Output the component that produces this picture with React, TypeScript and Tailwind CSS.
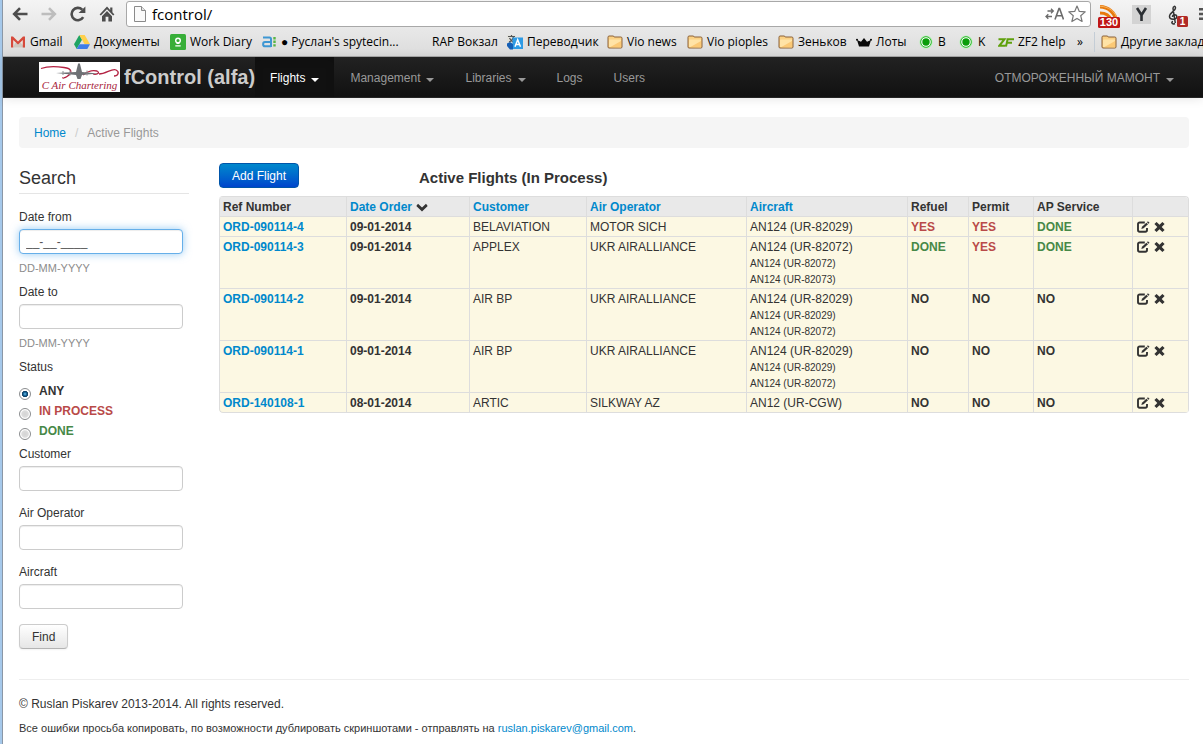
import { useState } from "react";
import type { ReactNode } from "react";

type State = "YES" | "NO" | "DONE";

interface Flight {
  ref: string;
  date: string;
  customer: string;
  operator: string;
  aircraft: string;
  legs: string[];
  refuel: State;
  permit: State;
  service: State;
}

const flights: Flight[] = [
  { ref: "ORD-090114-4", date: "09-01-2014", customer: "BELAVIATION", operator: "MOTOR SICH", aircraft: "AN124 (UR-82029)", legs: [], refuel: "YES", permit: "YES", service: "DONE" },
  { ref: "ORD-090114-3", date: "09-01-2014", customer: "APPLEX", operator: "UKR AIRALLIANCE", aircraft: "AN124 (UR-82072)", legs: ["AN124 (UR-82072)", "AN124 (UR-82073)"], refuel: "DONE", permit: "YES", service: "DONE" },
  { ref: "ORD-090114-2", date: "09-01-2014", customer: "AIR BP", operator: "UKR AIRALLIANCE", aircraft: "AN124 (UR-82029)", legs: ["AN124 (UR-82029)", "AN124 (UR-82072)"], refuel: "NO", permit: "NO", service: "NO" },
  { ref: "ORD-090114-1", date: "09-01-2014", customer: "AIR BP", operator: "UKR AIRALLIANCE", aircraft: "AN124 (UR-82029)", legs: ["AN124 (UR-82029)", "AN124 (UR-82072)"], refuel: "NO", permit: "NO", service: "NO" },
  { ref: "ORD-140108-1", date: "08-01-2014", customer: "ARTIC", operator: "SILKWAY AZ", aircraft: "AN12 (UR-CGW)", legs: [], refuel: "NO", permit: "NO", service: "NO" },
];

const stateColor: Record<State, string> = {
  YES: "text-[#b94a48]",
  DONE: "text-[#468847]",
  NO: "text-[#333333]",
};

/* ---------- browser icons ---------- */

const BackIcon = () => (
  <svg width="16" height="14" viewBox="0 0 16 14" fill="none" stroke="#4d4d4d" strokeWidth="2.6">
    <path d="M15.5 7H2.5M8 1.2 2.2 7 8 12.8" />
  </svg>
);
const ForwardIcon = () => (
  <svg width="16" height="14" viewBox="0 0 16 14" fill="none" stroke="#bdbdbd" strokeWidth="2.6">
    <path d="M.5 7h13M8 1.2 13.8 7 8 12.8" />
  </svg>
);
const ReloadIcon = () => (
  <svg width="16" height="16" viewBox="0 0 16 16">
    <path d="M13.2 11.2A6.2 6.2 0 1 1 12.2 3.6" fill="none" stroke="#4d4d4d" strokeWidth="2.6" />
    <path d="M15.4 .4V7H8.6z" fill="#4d4d4d" />
  </svg>
);
const HomeIcon = () => (
  <svg width="16" height="16" viewBox="0 0 16 16" fill="#4d4d4d">
    <path d="M8 .6 .6 8.4l1.3 1.2L8 3.3l6.100 6.300 1.300-1.200-2-2.100V1.500h-2.200v2.400z" />
    <path d="M8 5 3 10.200V15.400h3.600V10.800h2.800v4.600H13V10.200z" />
  </svg>
);
const PageIcon = () => (
  <svg width="12" height="16" viewBox="0 0 12 16" fill="#fafafa" stroke="#8a8a8a">
    <path d="M.5 .5h7l4 4v11H.5z" />
    <path d="M7.500 .5v4h4" fill="#e4e4e4" />
  </svg>
);
const TranslateIcon = () => (
  <svg width="19" height="14" viewBox="0 0 19 14" fill="none" stroke="#6b6b6b" strokeWidth="1.300">
    <path d="M2.500 4H8M6 1.800 8.300 4 6 6.200M7 9.500H1M3.300 7.300 1 9.500l2.300 2.200" />
    <path d="M10 12.500 14 1.500h.6L18.500 12.500M11.500 8.700h5.500" strokeWidth="1.600" />
  </svg>
);
const StarIcon = () => (
  <svg width="18" height="18" viewBox="0 0 18 18" fill="#fff" stroke="#777" strokeWidth="1.200" strokeLinejoin="round">
    <path d="m9 1 2.300 5.400 5.900.5-4.500 3.800 1.400 5.800L9 13.400l-5.100 3.100 1.400-5.800L.8 6.900l5.900-.5z" />
  </svg>
);
const RssIcon = () => (
  <svg width="22" height="23" viewBox="0 0 22 23">
    <path d="M2 1.800C10 2 17.500 7.500 18 16" fill="none" stroke="#e8790c" strokeWidth="3.600" />
    <path d="M2 8c5 0 9.500 2.500 11 7" fill="none" stroke="#e8790c" strokeWidth="3.200" />
    <path d="M2 1.200C10.500 1.500 18 7 18.800 14" fill="none" stroke="#f7b25c" strokeWidth="1" />
    <rect y="12" width="22" height="11" rx="1.500" fill="#c01616" />
    <text x="11" y="21" textAnchor="middle" fontSize="11" fontWeight="bold" fill="#fff">130</text>
  </svg>
);
const YIcon = () => (
  <svg width="19" height="19" viewBox="0 0 19 19">
    <rect width="19" height="19" fill="#d3d3d3" />
    <path d="M5 3 9.500 10 14 3M9.500 9.500V16" fill="none" stroke="#2b2f33" strokeWidth="2.600" />
  </svg>
);
const ClefIcon = () => (
  <svg width="20" height="22" viewBox="0 0 20 22">
    <path d="M7 18.500C3.500 20 3 16.500 5 16.500M7.300 18 5 3.500C5 1 7.500 .5 7.500 3 7.500 6 1.500 7.500 1.500 11.500 1.500 15 8.800 15.200 8.800 11.800 8.800 8.800 4.300 9 4.500 12" fill="none" stroke="#333" strokeWidth="1.500" />
    <rect x="9" y="11" width="11" height="11" rx="1.500" fill="#b02a26" />
    <text x="14.500" y="20" textAnchor="middle" fontSize="10" fontWeight="bold" fill="#fff">1</text>
  </svg>
);
const MenuIcon = () => (
  <svg width="14" height="14" viewBox="0 0 14 14" fill="#555" className="shrink-0">
    <path d="M0 1h14v2.400H0zM0 5.800h14v2.400H0zM0 10.600h14V13H0z" />
  </svg>
);

/* ---------- bookmark icons ---------- */

const GmailIcon = () => (
  <svg width="14" height="12" viewBox="0 0 14 12">
    <path d="M0 1h14v10.500H0z" fill="#e9e5e0" />
    <path d="M4 7 2 11.500h12L9.500 6.500z" fill="#cfc8c0" />
    <path d="M0 .5h2L7 5.500 12 .5h2v11h-2.200V4L7 8.600 2.200 4v7.500H0z" fill="#d64a3c" />
  </svg>
);
const DriveIcon = () => (
  <svg width="16" height="14" viewBox="0 0 16 14">
    <path d="M5.300 0 0 9.200 2.700 14 8 4.700z" fill="#1fa463" />
    <path d="M5.300 0h5.400L16 9.200h-5.400z" fill="#ffd04b" />
    <path d="M5.400 9.200H16L13.300 14H2.700z" fill="#3f7de8" />
  </svg>
);
const DiaryIcon = () => (
  <svg width="16" height="16" viewBox="0 0 16 16">
    <rect width="16" height="16" rx="1.500" fill="#37ae38" />
    <circle cx="8" cy="6.500" r="2.300" fill="none" stroke="#fff" strokeWidth="1.400" />
    <path d="M6.500 9.500h3M5.300 11.800h5.400" fill="none" stroke="#fff" strokeWidth="1.200" />
  </svg>
);
const AiIcon = () => (
  <svg width="15" height="12" viewBox="0 0 15 12" fill="none">
    <path d="M1 1.500h6.500c1 0 1.500.5 1.500 1.500v8M9 6H3C.5 6 .5 10.300 3 10.300h6" stroke="#3e97d3" strokeWidth="2" />
    <path d="M12.500 1v10" stroke="#59b545" strokeWidth="2.400" strokeDasharray="2.400 1.200" />
  </svg>
);
const GTranslateIcon = () => (
  <svg width="16" height="16" viewBox="0 0 16 16">
    <path d="M0 1h9v8H0z" fill="#e2e2dc" />
    <path d="M1 2.500h7M4.500 1v2M2 8c3-1 4-3 4.500-5M2.500 4c1 2 2 3 3.500 4" fill="none" stroke="#555" strokeWidth="1.200" />
    <path d="M5.500 3.500H16V15H5.500z" fill="#2e9be5" />
    <path d="M0 9.500 3 8l3 2v5.500H3L0 12z" fill="#155fb5" />
    <path d="M8 12.800 10.700 5.800 13.500 12.800M9 10.500h3.500" fill="none" stroke="#fff" strokeWidth="1.500" />
  </svg>
);
const FolderIcon = () => (
  <svg width="16" height="14" viewBox="0 0 16 14">
    <path d="M1 12V2.200C1 1.500 1.400 1 2 1h4c.7 0 1 .4 1.200 1h6.600c.8 0 1.200.4 1.200 1.200V12c0 .6-.4 1-1 1H2c-.6 0-1-.4-1-1z" fill="#fbd184" stroke="#8a6038" />
    <path d="M2 12V5.500c0-.6.400-1 1-1h11v7.700z" fill="#ffe3a6" />
    <path d="M3 12.300 14 6v6.300z" fill="#fbc976" />
  </svg>
);
const CrownIcon = () => (
  <svg width="16" height="9" viewBox="0 0 16 9">
    <path d="M3 8.500 1 2l4 1.800L8 0l3 3.800L15 2l-2 6.500z" fill="#0a0a0a" />
    <circle cx="1" cy="1.800" r="1" />
    <circle cx="15" cy="1.800" r="1" />
  </svg>
);
const DotIcon = () => (
  <svg width="14" height="14" viewBox="0 0 14 14">
    <circle cx="7" cy="7" r="6.600" fill="#b9f2b9" />
    <circle cx="7" cy="7" r="5.300" fill="#fff" stroke="#27b327" />
    <circle cx="7" cy="7" r="3.700" fill="#0a9d0a" />
  </svg>
);
const ZfIcon = () => (
  <svg width="16" height="9" viewBox="0 0 16 9" fill="none" stroke="#5fa00c" strokeWidth="2">
    <path d="M.5 1.200H6.500L1.300 7.800H7.500M8 8.500 9.600 1.200H16M9 4.800h5" />
  </svg>
);

const AirLogo = () => (
  <svg width="81" height="30" viewBox="0 0 81 30" className="block" role="img" aria-label="C Air Chartering">
    <rect width="81" height="30" fill="#fff" />
    <path d="M2 6.500C9 4 18 4.500 25 5.500c8 1 9 5 3 9-2 1.500-5 2-4 1M44 13c5-4 10-5 14-4 4 2-1 4-4 3M60 12c7 0 13-6 17-4 4 2 2 6-2 6" fill="none" stroke="#b32242" strokeWidth="1.300" />
    <path d="M17 11 37 10l2-8c.3-1 1.700-1 2 0l2 8 16 1.500-16 1.500-1.500 4h-3L37 13z" fill="#6e7175" />
    <path d="M24 9v4M31 8.500v5M48 8.500v5" stroke="#8b8e92" />
    <text x="40.500" y="27" textAnchor="middle" fontFamily="'Liberation Serif', serif" fontStyle="italic" fontWeight="normal" fontSize="11" fill="#a8243c">C Air Chartering</text>
  </svg>
);

/* ---------- application icons ---------- */

const EditIcon = () => (
  <svg width="13" height="12" viewBox="0 0 13 12" fill="none" stroke="#333">
    <path d="M7.800 1.500H2.700C1.600 1.500 1 2.100 1 3v6c0 1.100.6 1.700 1.700 1.700H8.300c1.100 0 1.700-.6 1.700-1.700V7" strokeWidth="1.900" />
    <path d="M4.300 8 5 5.800 9.400 1.700l1.600 1.500L6.600 7.300z" fill="#333" stroke="none" />
    <path d="m10 1.200.9-.9 1.600 1.500-.9.900z" fill="#333" stroke="none" />
  </svg>
);
const RemoveIcon = () => (
  <svg width="11" height="12" viewBox="0 0 11 12" fill="#333">
    <path d="M2.600 .9 5.500 3.700 8.400 .9l2.200 2.200-2.900 2.900 2.900 2.900-2.200 2.200-2.900-2.800-2.900 2.800L.4 8.900l2.900-2.900L.4 3.100z" />
  </svg>
);
const ChevronIcon = () => (
  <svg width="12" height="9" viewBox="0 0 12 9" fill="#333">
    <path d="M2 .8 6 4.500 10 .8l1.700 2.300L6 8.600 .3 3.100z" />
  </svg>
);
const Caret = () => (
  <span className="mt-1 inline-block border-x-4 border-t-4 border-x-transparent border-t-current" />
);

/* ---------- pieces ---------- */

function Bookmark({ icon, label, width }: { icon?: ReactNode; label: string; width: string }) {
  return (
    <a href="#" className={`flex shrink-0 items-center gap-1 whitespace-nowrap ${width}`}>
      {icon && <span className="flex w-4 shrink-0 justify-center">{icon}</span>}
      {label}
    </a>
  );
}

function NavItem({ label, menu, active }: { label: string; menu?: boolean; active?: boolean }) {
  return (
    <a
      href="#"
      className={`flex h-full items-center gap-[6px] px-[15px] pt-px ${active ? "bg-[#111111] text-white shadow-[inset_0_3px_8px_rgba(0,0,0,0.125)]" : "text-[#999999]"}`}
    >
      {label}
      {menu && <Caret />}
    </a>
  );
}

function Field({ id, label, hint, mask, focused }: { id: string; label: string; hint?: string; mask?: string; focused?: boolean }) {
  return (
    <div>
      <label htmlFor={id} className="mb-[2px] block">{label}</label>
      <input
        id={id}
        type="text"
        defaultValue={mask}
        className={`block h-[25px] w-[164px] rounded-[4px] border bg-white px-[6px] text-[#555555] outline-none ${focused ? "border-[#66afe9] shadow-[inset_0_1px_1px_rgba(0,0,0,0.075),0_0_8px_rgba(82,168,236,0.6)]" : "border-[#cccccc] shadow-[inset_0_1px_1px_rgba(0,0,0,0.075)]"}`}
      />
      {hint && <p className="mt-1 text-[11px] text-[#8c8c8c]">{hint}</p>}
    </div>
  );
}

function BrowserBar() {
  return (
    <header className="overflow-hidden border-b border-[#a9a9a9] bg-linear-to-b from-[#f4f4f4] to-[#dcdcdc] font-['Open_Sans','Noto_Sans',sans-serif] text-black">
      <div className="flex h-7 items-center pl-[9px]">
        <button type="button" aria-label="Back" className="w-[29px] shrink-0"><BackIcon /></button>
        <button type="button" aria-label="Forward" className="w-[29px] shrink-0"><ForwardIcon /></button>
        <button type="button" aria-label="Reload" className="w-[29px] shrink-0"><ReloadIcon /></button>
        <button type="button" aria-label="Home" className="w-[27px] shrink-0"><HomeIcon /></button>
        <div className="flex h-[26px] min-w-0 flex-1 items-center rounded-[3px] border border-[#a8a8a8] bg-white pr-1 pl-[7px]">
          <PageIcon />
          <input type="text" aria-label="Address" defaultValue="fcontrol/" className="ml-[6px] min-w-0 flex-1 bg-transparent text-[15px] outline-none" />
          <TranslateIcon />
          <button type="button" aria-label="Add bookmark" className="ml-1"><StarIcon /></button>
        </div>
        <div className="flex w-28 shrink-0 items-center pl-[7px] font-['Liberation_Sans',sans-serif]">
          <span className="w-[34px] shrink-0 pt-[4px]"><RssIcon /></span>
          <span className="w-9 shrink-0"><YIcon /></span>
          <span className="w-[31px] shrink-0 pt-[4px]"><ClefIcon /></span>
          <MenuIcon />
        </div>
      </div>
      <nav className="flex h-7 items-center pl-[7px] text-[12px]">
        <Bookmark icon={<GmailIcon />} label="Gmail" width="w-[64px]" />
        <Bookmark icon={<DriveIcon />} label="Документы" width="w-[96px]" />
        <Bookmark icon={<DiaryIcon />} label="Work Diary" width="w-[91px]" />
        <Bookmark icon={<AiIcon />} label="● Руслан's spytecin..." width="w-[171px]" />
        <Bookmark label="RAP Вокзал" width="w-[75px]" />
        <Bookmark icon={<GTranslateIcon />} label="Переводчик" width="w-[100px]" />
        <Bookmark icon={<FolderIcon />} label="Vio news" width="w-[80px]" />
        <Bookmark icon={<FolderIcon />} label="Vio pioples" width="w-[91px]" />
        <Bookmark icon={<FolderIcon />} label="Зеньков" width="w-[78px]" />
        <Bookmark icon={<CrownIcon />} label="Лоты" width="w-[62px]" />
        <Bookmark icon={<DotIcon />} label="B" width="w-[40px]" />
        <Bookmark icon={<DotIcon />} label="K" width="w-[40px]" />
        <Bookmark icon={<ZfIcon />} label="ZF2 help" width="w-[79px]" />
        <button type="button" aria-label="More bookmarks" className="w-[17px] shrink-0 text-left">»</button>
        <span className="mr-[6px] h-5 w-px shrink-0 bg-[#c4cdd6]" />
        <Bookmark icon={<FolderIcon />} label="Другие закладки" width="w-[120px]" />
      </nav>
    </header>
  );
}

function StatusRadios() {
  const [status, setStatus] = useState("ANY");
  const options = [
    { name: "ANY", color: "text-[#333333]" },
    { name: "IN PROCESS", color: "text-[#b94a48]" },
    { name: "DONE", color: "text-[#468847]" },
  ];
  return (
    <fieldset>
      <legend className="mb-1">Status</legend>
      {options.map((o) => (
        <label key={o.name} className={`flex items-start gap-2 font-bold ${o.color}`}>
          <input
            type="radio"
            name="status"
            checked={status === o.name}
            onChange={() => setStatus(o.name)}
            className="mt-[7px] size-3 shrink-0 appearance-none rounded-full border border-[#8b8d8f] bg-[radial-gradient(circle,#d4d4d4_0,#dcdcdc_45%,#ffffff_62%)] checked:bg-[radial-gradient(circle_at_50%_50%,#6fc4ee_0,#125f92_25%,#0b3b60_40%,#ffffff_50%)]"
          />
          {o.name}
        </label>
      ))}
    </fieldset>
  );
}

const head = "border-b border-l border-[#dddddd] px-[3px] pt-px text-left font-bold";
const cell = "border-b border-l border-[#dddddd] px-[3px] pt-px align-top";

function FlightTable() {
  return (
    <table className="w-full table-fixed border-separate border-spacing-0 overflow-hidden rounded-[4px] border-t border-r border-[#dddddd] leading-[18px]">
      <colgroup>
        <col className="w-[127px]" />
        <col className="w-[123px]" />
        <col className="w-[117px]" />
        <col className="w-[160px]" />
        <col className="w-[161px]" />
        <col className="w-[61px]" />
        <col className="w-[65px]" />
        <col className="w-[99px]" />
        <col />
      </colgroup>
      <thead className="bg-[#e9e9e9]">
        <tr>
          <th className={`${head} rounded-tl-[4px]`}>Ref Number</th>
          <th className={head}>
            <a href="#" className="flex items-center gap-1 text-[#0088cc]">Date Order <ChevronIcon /></a>
          </th>
          <th className={head}><a href="#" className="text-[#0088cc]">Customer</a></th>
          <th className={head}><a href="#" className="text-[#0088cc]">Air Operator</a></th>
          <th className={head}><a href="#" className="text-[#0088cc]">Aircraft</a></th>
          <th className={head}>Refuel</th>
          <th className={head}>Permit</th>
          <th className={head}>AP Service</th>
          <th className={head} aria-label="Actions"></th>
        </tr>
      </thead>
      <tbody className="bg-[#fcf8e3]">
        {flights.map((f, i) => (
          <tr key={f.ref}>
            <td className={`${cell} font-bold ${i === flights.length - 1 ? "rounded-bl-[4px]" : ""}`}>
              <a href="#" className="text-[#0088cc]">{f.ref}</a>
            </td>
            <td className={`${cell} font-bold`}>{f.date}</td>
            <td className={cell}>{f.customer}</td>
            <td className={cell}>{f.operator}</td>
            <td className={cell}>
              {f.aircraft}
              {f.legs.map((leg, n) => (
                <div key={n} className="text-[10px] leading-4">{leg}</div>
              ))}
            </td>
            <td className={`${cell} font-bold ${stateColor[f.refuel]}`}>{f.refuel}</td>
            <td className={`${cell} font-bold ${stateColor[f.permit]}`}>{f.permit}</td>
            <td className={`${cell} font-bold ${stateColor[f.service]}`}>{f.service}</td>
            <td className={cell}>
              <div className="flex h-[18px] items-center gap-1 pl-px">
                <a href="#" aria-label={`Edit ${f.ref}`}><EditIcon /></a>
                <a href="#" aria-label={`Remove ${f.ref}`}><RemoveIcon /></a>
              </div>
            </td>
          </tr>
        ))}
      </tbody>
    </table>
  );
}

export default function App() {
  return (
    <div className="flex min-h-screen bg-white font-['Liberation_Sans',Arial,sans-serif] text-[12px] leading-5 text-[#333333]">
      <div className="w-[3px] shrink-0 border-r border-[#8a97a6] bg-[#a5c8ea]" />
      <div className="min-w-0 flex-1">
        <BrowserBar />

        <div className="flex h-[41px] items-center border-b border-[#252525] bg-linear-to-b from-[#222222] to-[#111111] pl-9 shadow-[0_1px_10px_rgba(0,0,0,0.1)]">
          <a href="#" className="flex h-full items-center gap-1 text-[20px] font-bold whitespace-nowrap text-[#cccccc]">
            <AirLogo />
            fControl (alfa)
          </a>
          <nav className="flex h-full flex-1 gap-px">
            <NavItem label="Flights" menu active />
            <NavItem label="Management" menu />
            <NavItem label="Libraries" menu />
            <NavItem label="Logs" />
            <NavItem label="Users" />
          </nav>
          <div className="h-full pr-[14px]">
            <NavItem label="ОТМОРОЖЕННЫЙ МАМОНТ" menu />
          </div>
        </div>

        <div className="pt-[19px] pr-[14px] pl-4">
          <nav className="flex h-[31px] items-center rounded-[4px] bg-[#f5f5f5] px-[15px]">
            <a href="#" className="text-[#0088cc]">Home</a>
            <span className="px-[9px] text-[#cccccc]">/</span>
            <span className="text-[#999999]">Active Flights</span>
          </nav>

          <div className="mt-[15px] flex gap-[30px]">
            <aside className="w-[170px] shrink-0">
              <h2 className="mb-[13px] border-b border-[#e5e5e5] text-[18px] leading-[30px]">Search</h2>
              <form onSubmit={(e) => e.preventDefault()}>
                <div className="flex flex-col gap-1">
                  <Field id="date-from" label="Date from" hint="DD-MM-YYYY" mask="__-__-____" focused />
                  <Field id="date-to" label="Date to" hint="DD-MM-YYYY" />
                  <StatusRadios />
                </div>
                <div className="mt-[3px] flex flex-col gap-3">
                  <Field id="customer" label="Customer" />
                  <Field id="operator" label="Air Operator" />
                  <Field id="aircraft" label="Aircraft" />
                </div>
                <button
                  type="submit"
                  className="mt-[15px] h-[25px] rounded-[4px] border border-[#cccccc] border-b-[#b3b3b3] bg-linear-to-b from-white to-[#e6e6e6] px-3 shadow-[0_1px_2px_rgba(0,0,0,0.05)]"
                >
                  Find
                </button>
              </form>
            </aside>

            <main className="min-w-0 flex-1">
              <div className="flex h-[33px] items-start">
                <div className="w-[200px]">
                  <button
                    type="button"
                    className="h-[25px] rounded-[4px] border border-[#0055aa] bg-linear-to-b from-[#0088cc] to-[#0044cc] px-3 text-white"
                  >
                    Add Flight
                  </button>
                </div>
                <h1 className="text-[15px] leading-[30px] font-bold">Active Flights (In Process)</h1>
              </div>
              <FlightTable />
            </main>
          </div>

          <footer className="mt-[30px] border-t border-[#eeeeee] pt-[14px]">
            <p>© Ruslan Piskarev 2013-2014. All rights reserved.</p>
            <p className="mt-1 text-[11px]">
              Все ошибки просьба копировать, по возможности дублировать скриншотами - отправлять на{" "}
              <a href="#" className="text-[#0088cc]">ruslan.piskarev@gmail.com</a>.
            </p>
          </footer>
        </div>
      </div>
    </div>
  );
}
